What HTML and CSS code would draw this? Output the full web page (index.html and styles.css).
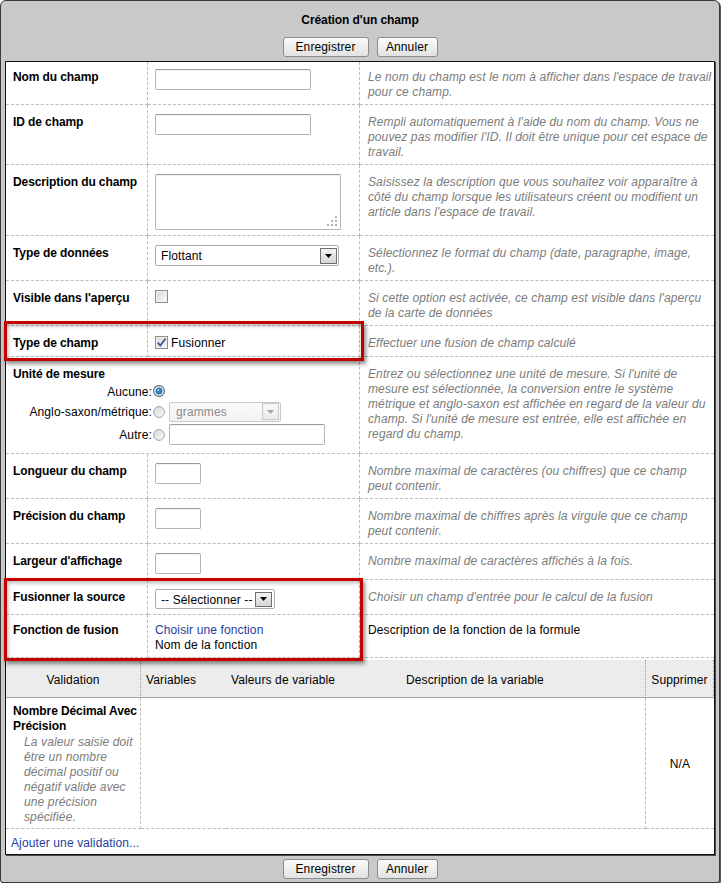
FILE: index.html
```html
<!DOCTYPE html>
<html lang="fr">
<head>
<meta charset="utf-8">
<title>Création d'un champ</title>
<link rel="stylesheet" href="styles.css">
</head>
<body>
<div class="window">
  <div class="titlebar">
    <h1 class="title">Création d'un champ</h1>
    <div class="actions">
      <button class="btn btn-save" type="button">Enregistrer</button>
      <button class="btn btn-cancel" type="button">Annuler</button>
    </div>
  </div>

  <div class="panel">
    <table class="form">
      <colgroup><col class="c1"><col class="c2"><col class="c3"></colgroup>
      <tr class="first">
        <th>Nom du champ</th>
        <td class="ctl"><input class="input w156" type="text"></td>
        <td class="desc">Le nom du champ est le nom à afficher dans l'espace de travail<br>pour ce champ.</td>
      </tr>
      <tr>
        <th>ID de champ</th>
        <td class="ctl"><input class="input w156" type="text"></td>
        <td class="desc">Rempli automatiquement à l'aide du nom du champ. Vous ne<br>pouvez pas modifier l'ID. Il doit être unique pour cet espace de<br>travail.</td>
      </tr>
      <tr>
        <th>Description du champ</th>
        <td class="ctl">
          <span class="area-wrap"><textarea class="area"></textarea><svg class="grip" width="10" height="10" viewBox="0 0 10 10"><rect x="8" y="0" width="2" height="2"/><rect x="4" y="4" width="2" height="2"/><rect x="8" y="4" width="2" height="2"/><rect x="0" y="8" width="2" height="2"/><rect x="4" y="8" width="2" height="2"/><rect x="8" y="8" width="2" height="2"/></svg></span>
        </td>
        <td class="desc">Saisissez la description que vous souhaitez voir apparaître à<br>côté du champ lorsque les utilisateurs créent ou modifient un<br>article dans l'espace de travail.</td>
      </tr>
      <tr>
        <th>Type de données</th>
        <td class="ctl">
          <div class="select sel-type"><span class="sel-text">Flottant</span><span class="sel-btn"><svg width="7" height="4" viewBox="0 0 7 4"><path d="M0 0h7L3.5 4z"/></svg></span></div>
        </td>
        <td class="desc">Sélectionnez le format du champ (date, paragraphe, image,<br>etc.).</td>
      </tr>
      <tr>
        <th>Visible dans l'aperçu</th>
        <td class="ctl"><span class="check"></span></td>
        <td class="desc">Si cette option est activée, ce champ est visible dans l'aperçu<br>de la carte de données</td>
      </tr>
      <tr>
        <th>Type de champ</th>
        <td class="ctl">
          <span class="checkline"><span class="check"><svg width="11" height="11" viewBox="0 0 11 11"><path d="M1.8 5.6 L4.3 8.6 L9.6 1.4" fill="none" stroke="#3d4f98" stroke-width="1.7"/></svg></span><span class="check-text">Fusionner</span></span>
        </td>
        <td class="desc">Effectuer une fusion de champ calculé</td>
      </tr>
      <tr class="unit-row">
        <td class="unit" colspan="2">
          <div class="unit-title">Unité de mesure</div>
          <div class="unit-grid">
            <span class="ulabel">Aucune:</span>
            <span class="radio"><svg width="12" height="12" viewBox="0 0 12 12"><circle cx="6" cy="6" r="5.4" fill="#f2f2f2" stroke="#5b6470" stroke-width="1.1"/><circle cx="6" cy="6" r="3.1" fill="#2a87cf" stroke="#1c5586" stroke-width="0.8"/><circle cx="5.2" cy="5" r="1.1" fill="#9fd2f5"/></svg></span>
            <span class="ucell"></span>

            <span class="ulabel">Anglo-saxon/métrique:</span>
            <span class="radio"><svg width="12" height="12" viewBox="0 0 12 12"><defs><linearGradient id="rg1" x1="0" y1="0" x2="1" y2="1"><stop offset="0" stop-color="#d6d6d6"/><stop offset="1" stop-color="#fafafa"/></linearGradient></defs><circle cx="6" cy="6" r="5.4" fill="url(#rg1)" stroke="#a4a4a4" stroke-width="1"/></svg></span>
            <div class="select sel-unit disabled"><span class="sel-text">grammes</span><span class="sel-btn"><svg width="7" height="4" viewBox="0 0 7 4"><path d="M0 0h7L3.5 4z"/></svg></span></div>

            <span class="ulabel">Autre:</span>
            <span class="radio"><svg width="12" height="12" viewBox="0 0 12 12"><defs><linearGradient id="rg2" x1="0" y1="0" x2="1" y2="1"><stop offset="0" stop-color="#d6d6d6"/><stop offset="1" stop-color="#fafafa"/></linearGradient></defs><circle cx="6" cy="6" r="5.4" fill="url(#rg2)" stroke="#a4a4a4" stroke-width="1"/></svg></span>
            <input class="input w156" type="text">
          </div>
        </td>
        <td class="desc">Entrez ou sélectionnez une unité de mesure. Si l'unité de<br>mesure est sélectionnée, la conversion entre le système<br>métrique et anglo-saxon est affichée en regard de la valeur du<br>champ. Si l'unité de mesure est entrée, elle est affichée en<br>regard du champ.</td>
      </tr>
      <tr>
        <th>Longueur du champ</th>
        <td class="ctl"><input class="input w46" type="text"></td>
        <td class="desc">Nombre maximal de caractères (ou chiffres) que ce champ<br>peut contenir.</td>
      </tr>
      <tr>
        <th>Précision du champ</th>
        <td class="ctl"><input class="input w46" type="text"></td>
        <td class="desc">Nombre maximal de chiffres après la virgule que ce champ<br>peut contenir.</td>
      </tr>
      <tr>
        <th>Largeur d'affichage</th>
        <td class="ctl"><input class="input w46" type="text"></td>
        <td class="desc">Nombre maximal de caractères affichés à la fois.</td>
      </tr>
      <tr>
        <th>Fusionner la source</th>
        <td class="ctl">
          <div class="select sel-source"><span class="sel-text">-- Sélectionner --</span><span class="sel-btn"><svg width="7" height="4" viewBox="0 0 7 4"><path d="M0 0h7L3.5 4z"/></svg></span></div>
        </td>
        <td class="desc">Choisir un champ d'entrée pour le calcul de la fusion</td>
      </tr>
      <tr class="last">
        <th>Fonction de fusion</th>
        <td class="ctl"><a class="link" href="#">Choisir une fonction</a><div>Nom de la fonction</div></td>
        <td class="desc plain">Description de la fonction de la formule</td>
      </tr>
    </table>

    <table class="vtable">
      <colgroup><col class="v1"><col class="v2"><col class="v3"><col class="v4"><col class="v5"></colgroup>
      <thead>
        <tr>
          <th class="vh1">Validation</th>
          <th>Variables</th>
          <th>Valeurs de variable</th>
          <th class="vh4">Description de la variable</th>
          <th class="vh5">Supprimer</th>
        </tr>
      </thead>
      <tbody>
        <tr>
          <td class="vname"><strong>Nombre Décimal Avec<br>Précision</strong><div class="vdesc">La valeur saisie doit être un nombre décimal positif ou négatif valide avec une précision spécifiée.</div></td>
          <td></td>
          <td></td>
          <td class="vb4"></td>
          <td class="na">N/A</td>
        </tr>
      </tbody>
    </table>
    <div class="add"><a class="link" href="#">Ajouter une validation...</a></div>
  </div>

  <div class="footer">
    <button class="btn btn-save" type="button">Enregistrer</button>
    <button class="btn btn-cancel" type="button">Annuler</button>
  </div>

  <div class="mark mark-type"></div>
  <div class="mark mark-fusion"></div>
</div>
</body>
</html>
```

FILE: styles.css
```css
* { box-sizing: border-box; }

html, body {
  margin: 0;
  padding: 0;
  background: #ffffff;
}

body {
  font-family: "Liberation Sans", Arial, sans-serif;
  font-size: 12px;
  line-height: 15px;
  letter-spacing: 0.12px;
  color: #000;
}

.window {
  position: relative;
  width: 720px;
  background: #c9c9c9;
  border: 1px solid #3a3a3a;
  border-radius: 6px 6px 3px 3px;
  box-shadow: 1px 1px 0 #5a5a5a;
}

.titlebar {
  padding: 12px 0 4px;
  text-align: center;
}

.title {
  margin: 0 0 9px;
  font-size: 12px;
  line-height: 15px;
  font-weight: bold;
  letter-spacing: -0.08px;
}

.actions,
.footer {
  display: flex;
  justify-content: center;
  gap: 8px;
}

.footer {
  padding: 4px 0 3px;
}

.btn {
  height: 20px;
  padding: 1px 0 0;
  font-family: "Liberation Sans", Arial, sans-serif;
  font-size: 12px;
  line-height: 17px;
  letter-spacing: 0.12px;
  color: #000;
  border: 1px solid #8c8c8c;
  border-radius: 3px;
  background: linear-gradient(#fbfbfb, #e2e2e2);
}

.btn-save { width: 86px; }
.btn-cancel { width: 61px; }

.panel {
  margin: 0 4px;
  background: #fff;
  border: 1px solid #111;
  box-shadow: 1px 1px 0 #4a4a4a;
}

/* ---------- form table ---------- */
.form {
  width: 100%;
  border-collapse: separate;
  border-spacing: 0;
  table-layout: fixed;
}

.form col.c1 { width: 142px; }
.form col.c2 { width: 212px; }

.form th,
.form td {
  vertical-align: top;
  text-align: left;
  padding: 9px 4px 5px 7px;
  border-bottom: 1px dashed #bcbcbc;
}

.form th {
  padding-top: 10px;
  padding-bottom: 4px;
  font-weight: bold;
  letter-spacing: -0.1px;
  border-right: 1px dashed #bcbcbc;
}

.form td.ctl,
.form td.unit {
  border-right: 1px dashed #bcbcbc;
}

.form td.desc {
  padding: 10px 0 4px 8px;
  font-style: italic;
  color: #7b7b7b;
}

.form td.desc.plain {
  font-style: normal;
  color: #000;
}

.form tr.first td.ctl { padding-top: 7px; }
.form tr.first th,
.form tr.first td.desc { padding-top: 8px; }

.form tr.last th,
.form tr.last td { padding-top: 8px; padding-bottom: 4px; }

.form tr.unit-row td.unit { padding-bottom: 8px; }

.input {
  display: block;
  height: 21px;
  margin: 0;
  padding: 0 3px;
  font: inherit;
  border: 1px solid #b4b4b4;
  border-top-color: #9c9c9c;
  border-radius: 2px;
  background: #fff;
  box-shadow: inset 0 1px 1px rgba(0,0,0,0.06);
}

.w156 { width: 156px; }
.w46 { width: 46px; }

.area-wrap {
  position: relative;
  display: block;
  width: 186px;
  height: 56px;
}

.area {
  display: block;
  width: 186px;
  height: 56px;
  margin: 0;
  resize: none;
  border: 1px solid #b4b4b4;
  border-top-color: #9c9c9c;
  border-radius: 2px;
  background: #fff;
  box-shadow: inset 0 1px 1px rgba(0,0,0,0.06);
}

.grip {
  position: absolute;
  right: 4px;
  bottom: 4px;
  fill: #b3b3b3;
}

.select {
  display: flex;
  align-items: center;
  justify-content: space-between;
  height: 21px;
  padding: 0 1px 0 5px;
  border: 1px solid #acacac;
  border-radius: 2px;
  background: #fff;
  white-space: nowrap;
}

.sel-text {
  padding-top: 2px;
}

.sel-btn {
  display: flex;
  align-items: center;
  justify-content: center;
  width: 17px;
  height: 16px;
  border: 1px solid #6e6e6e;
  background: linear-gradient(#f4f4f4, #d5d5d5);
}

.sel-btn svg { fill: #000; }

.sel-type { width: 184px; }
.sel-source { width: 120px; height: 20px; padding-right: 2px; }
.sel-source .sel-btn { height: 15px; }

.select.disabled {
  border-color: #c9c9c9;
  color: #8c8c8c;
  padding-left: 6px;
  background: linear-gradient(#fafafa, #f3f3f3);
}

.select.disabled .sel-btn {
  border-color: #c9c9c9;
  background: linear-gradient(#f7f7f7, #ececec);
}

.select.disabled .sel-btn svg { fill: #a3a3a3; }

.sel-unit { width: 112px; height: 20px; }
.sel-unit .sel-btn { height: 17px; }

.check {
  display: flex;
  align-items: center;
  justify-content: center;
  width: 13px;
  height: 13px;
  border: 1px solid #8f8f8f;
  background: linear-gradient(135deg, #d9d9d9, #fbfbfb);
  box-shadow: inset 0 0 0 1px #efefef;
}

.checkline {
  display: flex;
  align-items: flex-start;
  gap: 3px;
}

.checkline .check {
  margin-top: 1px;
}

.check-text {
  padding-top: 1px;
}

/* unit of measure */
.unit-title {
  padding-top: 1px;
  font-weight: bold;
  letter-spacing: -0.1px;
}

.unit-grid {
  display: grid;
  grid-template-columns: 139px 17px auto;
  grid-template-rows: 16px 21px 21px;
  row-gap: 2px;
  align-items: center;
  margin-top: 1px;
}

.ulabel {
  justify-self: end;
  padding-top: 2px;
}

.radio {
  display: flex;
  margin-left: 1px;
}

/* links */
.link {
  color: #1f3c9f;
  text-decoration: none;
}

/* ---------- validation table ---------- */
.vtable {
  width: 100%;
  margin-top: 2px;
  border-collapse: separate;
  border-spacing: 0;
  table-layout: fixed;
}

.vtable col.v1 { width: 135px; }
.vtable col.v2 { width: 85px; }
.vtable col.v3 { width: 175px; }
.vtable col.v4 { width: 245px; }
.vtable col.v5 { width: 68px; }

.vtable th {
  padding: 13px 0 9px 5px;
  font-weight: normal;
  text-align: left;
  background: #ececec;
  border-bottom: 1px solid #a4a4a4;
}

.vtable th.vh1 {
  padding-left: 0;
  text-align: center;
  border-right: 1px dotted #9a9a9a;
}

.vtable th.vh4 { border-right: 1px dotted #9a9a9a; }

.vtable th.vh5 {
  padding-left: 0;
  text-align: center;
  border-right: 1px dotted #9a9a9a;
}

.vtable td {
  padding: 6px 0 3px 7px;
  vertical-align: top;
  border-bottom: 1px dashed #bcbcbc;
}

.vtable td.vname { border-right: 1px dashed #bcbcbc; }
.vtable td.vb4 { border-right: 1px dashed #bcbcbc; }

.vname strong {
  letter-spacing: -0.1px;
}

.vtable td.na {
  padding: 3px 0 0;
  text-align: center;
  vertical-align: middle;
}

.vdesc {
  margin: 1px 0 0 11px;
  font-style: italic;
  color: #7b7b7b;
}

.add {
  padding: 7px 0 3px 5px;
}

/* ---------- annotation boxes ---------- */
.mark {
  position: absolute;
  border: 3px solid #c20000;
  box-shadow: 2px 3px 4px rgba(0,0,0,0.45), inset 1px 2px 4px rgba(0,0,0,0.28);
  pointer-events: none;
}

.mark-type {
  left: 3px;
  top: 320px;
  width: 360px;
  height: 40px;
}

.mark-fusion {
  left: 3px;
  top: 577px;
  width: 359px;
  height: 83px;
}
```
